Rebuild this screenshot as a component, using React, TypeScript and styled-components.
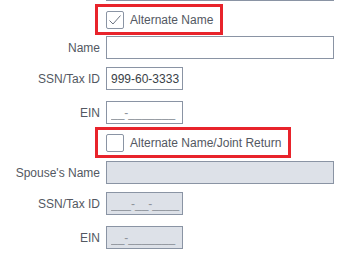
import { ReactElement } from 'react';
import styled, { createGlobalStyle } from 'styled-components';

/** Global */
const GlobalStyle = createGlobalStyle`
    html, body {
        margin: 0;
        padding: 0;
        background: #ffffff;
        overflow: hidden;
    }
    body {
        font-family: 'Liberation Sans', Arial, sans-serif;
    }
`;

/** Interfaces */
interface RowProps {
    $top: number;
}

interface InputProps {
    $short?: boolean;
}

/** Styled Components */
const Form = styled.div`
    width: 360px;
    height: 264px;
    overflow: hidden;
`;

const Inner = styled.div`
    display: flex;
    flex-direction: column;
    margin-top: -22px;
`;

const Row = styled.div<RowProps>`
    display: flex;
    align-items: center;
    margin-top: ${(props) => props.$top}px;
`;

const Label = styled.label`
    width: 100px;
    flex: none;
    margin-right: 6px;
    text-align: right;
    font-size: 12px;
    color: #535862;
    white-space: nowrap;
`;

const Field = styled.div`
    flex: 1;
    display: flex;
`;

const Input = styled.input<InputProps>`
    box-sizing: border-box;
    width: ${(props) => (props.$short ? '77px' : '228px')};
    height: 23px;
    margin: 0;
    padding: 0 0 0 4px;
    border: 1px solid #8a94a4;
    border-radius: 0;
    background: #ffffff;
    font-family: 'Liberation Sans', Arial, sans-serif;
    font-size: 12px;
    color: #3a3f48;
    outline: none;

    &::placeholder {
        color: #8e939b;
        opacity: 1;
    }

    &:disabled {
        background: #dde1e8;
    }
`;

const Highlight = styled.div`
    display: inline-flex;
    align-items: center;
    height: 31px;
    box-sizing: border-box;
    margin-left: -11px;
    padding: 0 7px 0 8px;
    border: 3px solid #e8232b;
    gap: 6px;
`;

const Box = styled.span`
    box-sizing: border-box;
    width: 18px;
    height: 18px;
    display: flex;
    align-items: center;
    justify-content: center;
    border: 1px solid #8a94a4;
    border-radius: 2px;
    background: #ffffff;
`;

const CheckText = styled.span`
    font-size: 12px;
    color: #535862;
    white-space: nowrap;
`;

const Check = ({ checked, text }: { checked: boolean; text: string }): ReactElement => (
    <Highlight>
        <Box>
            {checked && (
                <svg width="14" height="12" viewBox="0 0 14 12">
                    <path d="M1.5 6.5 L5 10 L12.5 1.5" fill="none" stroke="#6b7280" strokeWidth="1" />
                </svg>
            )}
        </Box>
        <CheckText>{text}</CheckText>
    </Highlight>
);

/**
 * Alternate name form
 */
const App = (): ReactElement => {
    return (
        <Form>
            <GlobalStyle />
            <Inner>
                <Row $top={0}>
                    <Label />
                    <Field>
                        <Input />
                    </Field>
                </Row>
                <Row $top={3}>
                    <Label />
                    <Field>
                        <Check checked text="Alternate Name" />
                    </Field>
                </Row>
                <Row $top={1}>
                    <Label>Name</Label>
                    <Field>
                        <Input />
                    </Field>
                </Row>
                <Row $top={8}>
                    <Label>SSN/Tax ID</Label>
                    <Field>
                        <Input $short defaultValue="999-60-3333" />
                    </Field>
                </Row>
                <Row $top={11}>
                    <Label>EIN</Label>
                    <Field>
                        <Input $short placeholder="__-_______" />
                    </Field>
                </Row>
                <Row $top={3}>
                    <Label />
                    <Field>
                        <Check checked={false} text="Alternate Name/Joint Return" />
                    </Field>
                </Row>
                <Row $top={3}>
                    <Label>Spouse's Name</Label>
                    <Field>
                        <Input disabled />
                    </Field>
                </Row>
                <Row $top={8}>
                    <Label>SSN/Tax ID</Label>
                    <Field>
                        <Input $short disabled placeholder="___-__-____" />
                    </Field>
                </Row>
                <Row $top={11}>
                    <Label>EIN</Label>
                    <Field>
                        <Input $short disabled placeholder="__-_______" />
                    </Field>
                </Row>
            </Inner>
        </Form>
    );
};

export default App;
